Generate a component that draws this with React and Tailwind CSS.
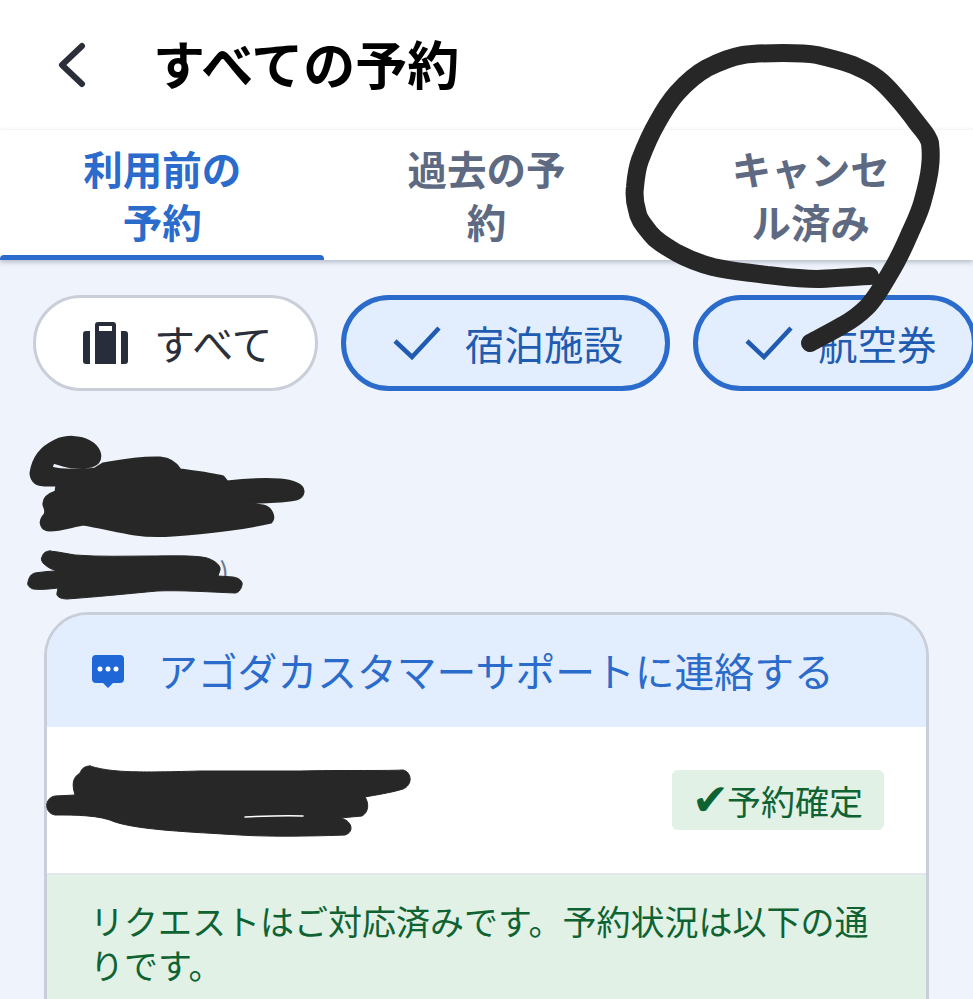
const font = { fontFamily: '"Noto Sans CJK JP", "Noto Sans", sans-serif' };

const tabs = [
  { label: '利用前の予約', active: true },
  { label: '過去の予約' },
  { label: 'キャンセル済み' },
];

const Suitcase = () => (
  <svg width="45" height="42" viewBox="0 0 45 42" className="shrink-0">
    <path fill="#272d3a" fillRule="evenodd" d="M12 9V3a3 3 0 0 1 3-3h15a3 3 0 0 1 3 3v6h9a3 3 0 0 1 3 3v27a3 3 0 0 1-3 3H3a3 3 0 0 1-3-3V12a3 3 0 0 1 3-3zm4 0h13V4H16z" />
    <path fill="#fff" d="M7 9h5v33H7zM33 9h5v33h-5z" />
  </svg>
);

const Check = () => (
  <svg width="48" height="34" viewBox="0 0 48 34" className="shrink-0">
    <path d="M2 15l17 16L46 2" fill="none" stroke="#1f5bb0" strokeWidth="4.5" />
  </svg>
);

const Chat = () => (
  <svg width="32" height="33" viewBox="0 0 32 33" className="shrink-0">
    <path fill="#1f66d6" d="M4 0h24a4 4 0 0 1 4 4v20a4 4 0 0 1-4 4h-7l-5 5-5-5H4a4 4 0 0 1-4-4V4a4 4 0 0 1 4-4z" />
    <circle cx="8" cy="14" r="2.5" fill="#fff" />
    <circle cx="16" cy="14" r="2.5" fill="#fff" />
    <circle cx="24" cy="14" r="2.5" fill="#fff" />
  </svg>
);

// marker scribbles drawn over the screenshot
const Scribbles = () => (
  <svg width="973" height="999" viewBox="0 0 973 999" className="absolute inset-0 pointer-events-none">
    <g fill="none" stroke="#272727" strokeLinecap="round" strokeLinejoin="round">
      <path strokeWidth="18" d="M870 276C845 277 830 279 817 279C800 279 785 277 767 275C745 272 730 271 713 267C698 263 688 259 677 253C665 246 656 241 650 233C642 223 638 218 637 210C634 200 634 195 635 187C636 176 637 168 640 160C645 147 650 135 657 123C663 112 669 102 677 93C686 83 696 74 707 68C719 62 731 57 743 55C757 53 770 53 783 53C795 53 806 53 817 55C830 58 842 61 853 65C862 69 870 72 877 78C885 84 891 91 897 98C905 107 911 115 917 123C923 131 928 135 930 143C931 151 931 159 930 167C929 178 926 189 923 200C920 212 915 222 910 233C904 247 898 260 890 273C883 285 876 298 867 307C860 314 852 320 843 325C833 331 821 337 810 343" />
      <path fill="#272727" strokeWidth="3" d="M31 473C33 458 42 447 55 441C66 436 80 436 90 442C99 447 102 456 98 462C94 467 82 468 72 467C64 466 58 463 53 462L51 468C62 471 85 471 95 469L103 464C120 461 140 457 160 458C170 459 176 463 180 470C195 472 212 474 223 477L227 482C245 480 267 479 280 480C290 481 304 484 303 492C302 500 292 500 280 501C260 502 238 503 217 503C235 504 252 504 263 506C272 508 275 518 271 522C250 527 210 533 173 535C160 536 148 536 135 534C118 531 100 527 83 524C72 526 60 530 50 530C42 530 39 523 43 517C47 514 46 510 44 505C43 498 50 494 56 492L57 485C50 485 40 486 36 483C32 480 31 476 31 473Z" />
      <path fill="#272727" strokeWidth="1" d="M50 551C60 552 68 554 75 555C100 557 125 556 150 556C170 556 195 555 207 558C216 561 221 566 220 570L218 576L233 577C240 578 243 582 242 585C241 590 238 593 235 593C210 592 180 590 157 591C125 594 95 597 67 599C60 599 56 596 57 593L58 588C50 589 40 590 33 589C28 587 27 584 28 582C29 577 31 574 35 573C42 572 50 571 57 571C50 569 46 566 43 563C41 560 41 558 42 557C43 553 46 551 50 551Z" />
      <path fill="#272727" strokeWidth="1" d="M90 766C110 772 130 773 200 771L300 771C340 770 380 771 403 770C412 772 413 785 403 789C390 793 375 795 365 797C369 803 369 812 362 816L340 818C352 820 355 832 345 835C320 836 270 837 240 835C190 832 140 830 115 822C100 815 75 815 55 815C44 813 44 798 55 796L75 795C72 785 72 778 80 773C82 768 85 766 90 766Z" />
      <path stroke="#ffffff" strokeWidth="1.5" d="M245 817C265 816 285 815 303 816" />
    </g>
  </svg>
);

export default function App() {
  return (
    <div className="relative h-[999px] w-[973px] overflow-hidden bg-[#eef3fc]" style={font}>
      <header className="flex h-[130px] items-center bg-white shadow-[0_2px_6px_rgba(0,0,0,0.06)] relative">
        <svg width="30" height="46" viewBox="0 0 30 46" className="ml-[57px]">
          <path d="M25 4L5 23l20 19" fill="none" stroke="#2a2f3a" strokeWidth="6" strokeLinecap="round" strokeLinejoin="round" />
        </svg>
        <h1 className="ml-[66px] pb-[4px] text-[52px] font-bold leading-none text-black">すべての予約</h1>
      </header>

      <nav className="relative flex h-[130px] bg-white shadow-[0_2px_5px_rgba(40,50,70,0.3)]">
        {tabs.map((tab) => (
          <div key={tab.label} className="relative flex w-1/3 items-center justify-center pb-[3px]">
            <span className={`w-[160px] text-center text-[39.5px] font-bold leading-[53px] ${tab.active ? 'text-[#2a6bcb]' : 'text-[#5e6a82]'}`}>
              {tab.label}
            </span>
            {tab.active && <div className="absolute inset-x-0 bottom-0 h-[5px] rounded-t-sm bg-[#2a6bcb]" />}
          </div>
        ))}
      </nav>

      <div className="mt-[35px] flex gap-[23px] pl-[33px]">
        <div className="flex h-[96px] w-[285px] shrink-0 items-center gap-[26px] rounded-full border-[3px] border-[#c9ced8] bg-white pl-[47px]">
          <Suitcase />
          <span className="text-[41px] text-[#2a2f3a]">すべて</span>
        </div>
        <div className="flex h-[96px] w-[329px] shrink-0 items-center gap-[24px] rounded-full border-[5px] border-[#2a6bcb] bg-[#e2edfd] pl-[47px]">
          <Check />
          <span className="text-[39.5px] text-[#1f5bb0]">宿泊施設</span>
        </div>
        <div className="flex h-[96px] w-[284px] shrink-0 items-center gap-[25px] rounded-full border-[5px] border-[#2a6bcb] bg-[#e2edfd] pl-[47px]">
          <Check />
          <span className="text-[39.5px] text-[#1f5bb0]">航空券</span>
        </div>
      </div>

      <div className="ml-[33px] mt-[165px] w-[196px] text-right text-[28px] leading-[30px] text-[#6b7890]">)</div>

      <section className="ml-[44px] mt-[26px] w-[885px] overflow-hidden rounded-t-[44px] border-[3px] border-b-0 border-[#c9cfda] bg-white">
        <div className="flex h-[112px] items-center gap-[34px] bg-[#e2edfd] pl-[45px]">
          <Chat />
          <span className="pb-[3px] text-[39.8px] text-[#2a6bcb]">アゴダカスタマーサポートに連絡する</span>
        </div>
        <div className="flex h-[148px] items-center justify-end border-b-[2px] border-[#e4e7ec] pr-[42px]">
          <div className="flex h-[60px] w-[212px] items-center rounded-md bg-[#e1f1e5] pl-[20px] text-[34px] text-[#0f6333]">
            <span className="w-[35px] text-[44px] leading-none" style={{ fontFamily: '"DejaVu Sans", sans-serif' }}>✔</span>
            <span>予約確定</span>
          </div>
        </div>
        <div className="h-[200px] bg-[#e1f1e5] pl-[43px] pr-[40px] pt-[24px] text-[34px] leading-[44px] text-[#0f6333]">
          リクエストはご対応済みです。予約状況は以下の通りです。
        </div>
      </section>

      <Scribbles />
    </div>
  );
}
